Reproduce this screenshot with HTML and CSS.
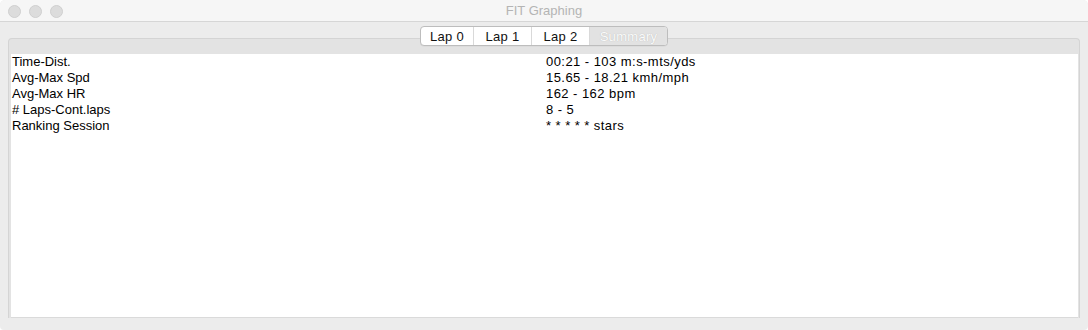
FILE: index.html
```html
<!DOCTYPE html>
<html>
<head>
<meta charset="utf-8">
<title>FIT Graphing</title>
<link rel="stylesheet" href="styles.css">
</head>
<body>
<div class="window">
  <div class="titlebar">
    <div class="lights">
      <span class="light"></span>
      <span class="light"></span>
      <span class="light"></span>
    </div>
    <div class="title">FIT Graphing</div>
  </div>
  <div class="main">
    <div class="tabs">
      <div class="tab t0">Lap 0</div>
      <div class="tab t1">Lap 1</div>
      <div class="tab t2">Lap 2</div>
      <div class="tab t3 selected">Summary</div>
    </div>
    <div class="panel">
      <div class="content">
        <div class="row"><span class="label">Time-Dist.</span><span class="value">00:21 - 103 m:s-mts/yds</span></div>
        <div class="row"><span class="label">Avg-Max Spd</span><span class="value">15.65 - 18.21 kmh/mph</span></div>
        <div class="row"><span class="label">Avg-Max HR</span><span class="value">162 - 162 bpm</span></div>
        <div class="row"><span class="label"># Laps-Cont.laps</span><span class="value">8 - 5</span></div>
        <div class="row"><span class="label">Ranking Session</span><span class="value">* * * * * stars</span></div>
      </div>
    </div>
  </div>
</div>
</body>
</html>
```
FILE: styles.css
```css
html, body {
  margin: 0;
  padding: 0;
  background: #ffffff;
}
body {
  width: 1088px;
  height: 330px;
  overflow: hidden;
  font-family: "Liberation Sans", Arial, sans-serif;
  font-size: 13px;
  color: #000;
}
.window {
  width: 1088px;
  height: 330px;
  background: #ececec;
  border-radius: 5px 5px 4px 4px;
  overflow: hidden;
  display: flex;
  flex-direction: column;
}
.titlebar {
  height: 21px;
  border-bottom: 1px solid #d6d6d6;
  background: #f6f6f6;
  position: relative;
  display: flex;
  align-items: center;
  justify-content: center;
}
.lights {
  position: absolute;
  left: 8px;
  top: 5px;
  display: flex;
  gap: 8px;
}
.light {
  width: 11px;
  height: 11px;
  border-radius: 50%;
  background: #dcdcdc;
  border: 0.5px solid #cfcfcf;
}
.title {
  color: #b4b4b4;
  font-size: 13px;
}
.main {
  flex: 1;
  padding: 4px 8px 0 8px;
  display: flex;
  flex-direction: column;
}
.tabs {
  align-self: center;
  display: flex;
  height: 18px;
  border: 1px solid #bdbdbd;
  border-radius: 4px;
  background: #ffffff;
  margin-bottom: -8px;
  position: relative;
  z-index: 1;
  box-shadow: 0 0.5px 0 rgba(0,0,0,0.06);
  overflow: hidden;
}
.tab {
  display: flex;
  align-items: center;
  justify-content: center;
  font-size: 13px;
  color: #111;
  border-right: 1px solid #d9d9d9;
  letter-spacing: 0.3px;
}
.t0 { width: 52px; }
.t1 { width: 57px; }
.t2 { width: 57px; }
.t3 { width: 77px; border-right: none; }
.tab.selected {
  background: #e2e2e2;
  color: #fbfbfb;
  text-shadow: 0 0 1px #b0b0b0;
}
.panel {
  height: 264px;
  border: 1px solid #d4d4d4;
  border-bottom: none;
  border-radius: 4px 4px 0 0;
  background: #e3e3e3;
  padding: 15px 1px 0 2px;
  display: flex;
  flex-direction: column;
}
.content {
  flex: 1;
  background: #ffffff;
  border-bottom: 1px solid #dadada;
  padding: 0 1px;
}
.row {
  display: grid;
  grid-template-columns: 534px 1fr;
  line-height: 16px;
  height: 16px;
}
.label, .value {
  white-space: nowrap;
}
.value {
  letter-spacing: 0.45px;
}
```
